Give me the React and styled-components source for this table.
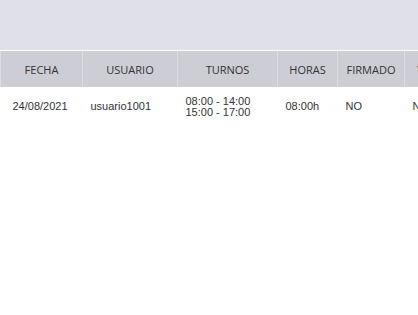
import styled, { createGlobalStyle } from "styled-components";

const GlobalStyle = createGlobalStyle`
  html, body {
    margin: 0;
    padding: 0;
    background: #ffffff;
    overflow: hidden;
  }
`;

const rows = [
  {
    fecha: "24/08/2021",
    usuario: "usuario1001",
    turnos: ["08:00 - 14:00", "15:00 - 17:00"],
    horas: "08:00h",
    firmado: "NO",
    validado: "NO",
  },
];

const columns = [
  { label: "FECHA", width: 82 },
  { label: "USUARIO", width: 95 },
  { label: "TURNOS", width: 100 },
  { label: "HORAS", width: 60 },
  { label: "FIRMADO", width: 67 },
  { label: "VALIDADO", width: 79 },
];

const Page = styled.div`
  width: 600px;
`;

const TopBand = styled.div`
  height: 50px;
  background: #e0e0e8;
  border-bottom: 1px solid #ffffff;
`;

const Table = styled.table`
  border-collapse: collapse;
  table-layout: fixed;
  width: 483px;
`;

const HeadCell = styled.th`
  width: ${(p) => p.$w}px;
  height: 36px;
  padding: 0;
  box-sizing: border-box;
  background: #cdcdd5;
  border-left: 1px solid #dcdce2;
  font-family: "Open Sans", sans-serif;
  font-size: 11px;
  font-weight: 400;
  color: #333333;
  text-align: center;
  vertical-align: middle;
`;

const Cell = styled.td`
  height: 36px;
  padding: 3px 0 0 ${(p) => (p.$first ? 12 : 8)}px;
  box-sizing: border-box;
  font-family: "Liberation Sans", Arial, sans-serif;
  font-size: 11px;
  line-height: 11px;
  color: #333333;
  text-align: left;
  vertical-align: middle;
  white-space: nowrap;
`;

const Turno = styled.div`
  line-height: 11px;
`;

export default function App() {
  return (
    <Page>
      <GlobalStyle />
      <TopBand />
      <Table>
        <thead>
          <tr>
            {columns.map((c) => (
              <HeadCell key={c.label} $w={c.width}>
                {c.label}
              </HeadCell>
            ))}
          </tr>
        </thead>
        <tbody>
          {rows.map((r) => (
            <tr key={r.fecha + r.usuario}>
              <Cell $first>{r.fecha}</Cell>
              <Cell>{r.usuario}</Cell>
              <Cell>
                {r.turnos.map((t) => (
                  <Turno key={t}>{t}</Turno>
                ))}
              </Cell>
              <Cell>{r.horas}</Cell>
              <Cell>{r.firmado}</Cell>
              <Cell>{r.validado}</Cell>
            </tr>
          ))}
        </tbody>
      </Table>
    </Page>
  );
}
